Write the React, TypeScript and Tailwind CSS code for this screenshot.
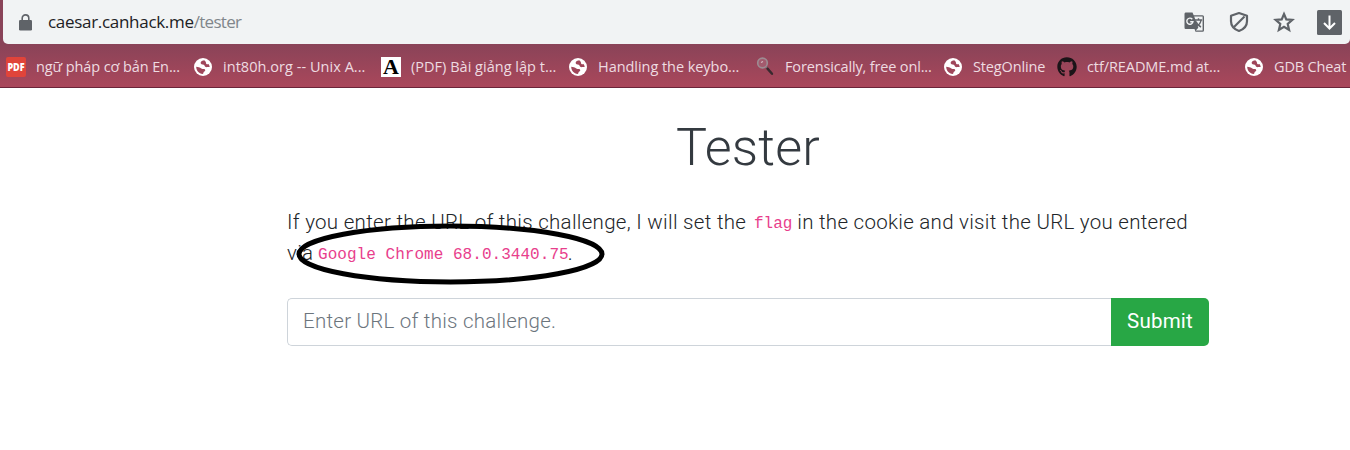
import React from "react";
import { FaGithub } from "react-icons/fa";

function Globe() {
  return (
    <svg viewBox="0 0 18 18" className="h-[18px] w-[18px]">
      <circle cx="9" cy="9" r="9" fill="#fff" />
      <path d="M10.300 2.300C7.200 2.500 6.300 4.200 6.800 5.600c.5 1.300 3.200.5 3.700 2 .4 1.200 1.300 1.700 2.800 1.500h2.400C15.600 8 15.200 7 14.600 6c-1 .7-2.700.3-2.600-1 0-1.200-.7-1.500-1.700-2.700Z" fill="#9f465a" />
      <path d="M2.200 8.800C2.300 12.700 5 15.700 8.600 15.900c1.400-.3.400-1.700 1.700-2.300 1.400-.7 1.300-2.600-.4-2.700-1.400-.1-1.600.4-2.600-.4C6 9.300 4 9 2.200 8.800Z" fill="#9f465a" />
    </svg>
  );
}

function PdfIcon() {
  return (
    <span className="flex h-5 w-5 items-center justify-center rounded-[2px] bg-[#e0443a] font-['Open_Sans',sans-serif] text-[9px] font-extrabold text-white">
      <span className="scale-y-125">PDF</span>
    </span>
  );
}

function LetterIcon() {
  return (
    <span className="flex h-5 w-5 items-center justify-center bg-white font-['Liberation_Serif',serif] text-[22px] font-bold leading-5 text-black">
      A
    </span>
  );
}

function Magnifier() {
  return (
    <svg viewBox="0 0 20 20" className="h-5 w-5">
      <circle cx="7.500" cy="6" r="4.800" fill="#a35a6d" stroke="#9d8b92" strokeWidth="1.700" />
      <path d="M6 5.500 8 4.500" stroke="#d5bcc4" strokeWidth="1.200" />
      <path d="m11 9.800 2 2" stroke="#877b80" strokeWidth="1.500" />
      <path d="m12.500 11.600 4.500 5.200" stroke="#38292e" strokeWidth="2.400" strokeLinecap="round" />
    </svg>
  );
}

const bookmarks = [
  { label: "ngữ pháp cơ bản En...", icon: <PdfIcon />, width: "w-[187px]", text: "tracking-[-0.1px]" },
  { label: "int80h.org -- Unix A...", icon: <Globe />, width: "w-[188px]", text: "tracking-[0.04px]" },
  { label: "(PDF) Bài giảng lập t...", icon: <LetterIcon />, width: "w-[187px]", text: "tracking-[0.02px]" },
  { label: "Handling the keybo...", icon: <Globe />, width: "w-[187px]", text: "tracking-[-0.05px]" },
  { label: "Forensically, free onl...", icon: <Magnifier />, width: "w-[188px]", text: "tracking-[-0.15px]" },
  { label: "StegOnline", icon: <Globe />, width: "w-[114px]", text: "tracking-[-0.15px]" },
  { label: "ctf/README.md at...", icon: <FaGithub className="h-5 w-5 text-[#1b1418]" />, width: "w-[187px]", text: "tracking-[-0.08px]" },
  { label: "GDB Cheat", icon: <Globe />, width: "w-[106px]", text: "tracking-[-0.15px]" },
];

export default function App() {
  return (
    <div className="h-[450px] w-[1350px] overflow-hidden bg-white">
      <header className="h-[88px] border-b border-[#6b2439] bg-linear-to-b from-[#894358] from-50% to-[#aa475b]">
        <div className="ml-[3px] flex h-11 items-center rounded-b-[5px] bg-[#f1f3f4] pl-4">
          <svg viewBox="0 0 13 17" className="h-[17px] w-[13px]">
            <rect y="6" width="13" height="10.500" rx="1.300" fill="#5f6368" />
            <path d="M3.200 7V4.200a3.300 3.300 0 0 1 6.600 0V7" fill="none" stroke="#5f6368" strokeWidth="1.600" />
          </svg>
          <span className="ml-4 grow whitespace-pre font-['Open_Sans',sans-serif] text-[17px] tracking-[-0.3px] text-[#202124]">
            caesar.canhack.me<span className="tracking-[-0.7px] text-[#80868b]">/tester</span>
          </span>
          <div className="mr-[8px] flex items-center text-[#5f6368]">
            <svg viewBox="0 0 21 21" className="mr-[24px] h-[21px] w-[21px]">
              <path d="M1.500.5h7l1.200 2.800h8.800q1.500 0 1.500 1.500v13.400q0 1.500-1.500 1.500h-7l-1-2.700h-9Q.500 17 .500 15.500V2Q.500.5 1.500.5Z" fill="#5f6368" />
              <path d="M10.200 4.500h8.400v14h-6.800l2.500-2.800Z" fill="#f1f3f4" />
              <path d="M11 8h7.200M14.500 6.200V8M12 9.500c.8 2.500 3 4.500 5 5.500M17 8c-.3 3-2 5-4.500 6.500" fill="none" stroke="#5f6368" strokeWidth="1.400" />
              <path d="M8.300 7.200A3.100 3.100 0 1 0 9 9.700H6.200" fill="none" stroke="#f1f3f4" strokeWidth="1.400" />
            </svg>
            <svg viewBox="0 0 20 22" className="mr-[24px] h-[22px] w-[20px]" fill="none" stroke="currentColor" strokeWidth="2.200">
              <path d="M10 2 2 4.800v5.400c0 4.500 3.200 8 8 9.800 4.800-1.800 8-5.300 8-9.800V4.800Z" strokeLinejoin="round" />
              <path d="M15.500 5.500 5 16" />
            </svg>
            <svg viewBox="0 0 22 22" className="mr-[22px] h-[22px] w-[22px]" fill="none" stroke="currentColor" strokeWidth="2.200">
              <path d="m11 3 2.300 5.400 6 .5-4.600 4 1.400 6-5.100-3.200-5.100 3.200 1.400-6-4.600-4 6-.5Z" />
            </svg>
            <svg viewBox="0 0 25 25" className="h-[25px] w-[25px]">
              <rect width="25" height="25" rx="1.500" fill="#5f6368" />
              <path d="M12.500 5.500v13M7 13l5.500 5.500L18 13" fill="none" stroke="#fff" strokeWidth="2" />
            </svg>
          </div>
        </div>
        <nav className="flex h-[43px] items-center pl-[6px] pt-[2px]">
          {bookmarks.map((b) => (
            <div key={b.label} className={`flex shrink-0 items-center ${b.width}`}>
              <span className="flex h-5 w-5 shrink-0 items-center justify-center">{b.icon}</span>
              <span className={`ml-[10px] whitespace-nowrap font-['Open_Sans',sans-serif] text-[14.500px] leading-5 text-[#eedce1] ${b.text}`}>{b.label}</span>
            </div>
          ))}
        </nav>
      </header>
      <main className="relative ml-[287px] w-[922px] font-['Roboto',sans-serif] font-[350] text-[#212529]">
        <h1 className="pt-[29px] text-center text-[52px] font-light leading-[62px] tracking-[0.2px] text-[#343a40]">Tester</h1>
        <div className="mt-[28px] whitespace-nowrap text-[20.500px]">
          <p className="flex h-[31px] items-baseline whitespace-pre leading-[31px]">
            <span className="w-[467px] tracking-[0.300px]">If you enter the URL of this challenge, I will set the </span>
            <code className="relative -top-px w-[39px] font-['Liberation_Mono',monospace] text-[16px] font-normal text-[#e83e8c]">flag</code>
            <span className="-ml-px tracking-[0.280px]"> in the cookie and visit the URL you entered</span>
          </p>
          <p className="flex h-[31px] items-baseline whitespace-pre leading-[31px]">
            <span className="w-[31px] tracking-[0.300px]">via </span>
            <code className="relative -top-px font-['Liberation_Mono',monospace] text-[16px] font-normal tracking-[0.040px] text-[#e83e8c]">Google Chrome 68.0.3440.75</code>
            <span className="-ml-px">.</span>
          </p>
        </div>
        <form className="mt-[29px] flex h-12 text-[20.500px]" onSubmit={(e) => e.preventDefault()}>
          <input
            className="min-w-0 grow rounded-l-[5px] border border-r-0 border-[#ced4da] px-[15px] pb-[2px] tracking-[0.250px] outline-none placeholder:text-[#6c757d]"
            placeholder="Enter URL of this challenge."
          />
          <button className="w-[98px] rounded-r-[5px] bg-[#28a745] pb-[2px] font-normal tracking-[0.200px] text-white">Submit</button>
        </form>
        <svg viewBox="0 0 310 64" className="pointer-events-none absolute left-[8px] top-[134px] h-16 w-[310px]">
          <ellipse cx="155.500" cy="32" rx="151.500" ry="28" fill="none" stroke="#000" strokeWidth="5" />
        </svg>
      </main>
    </div>
  );
}
